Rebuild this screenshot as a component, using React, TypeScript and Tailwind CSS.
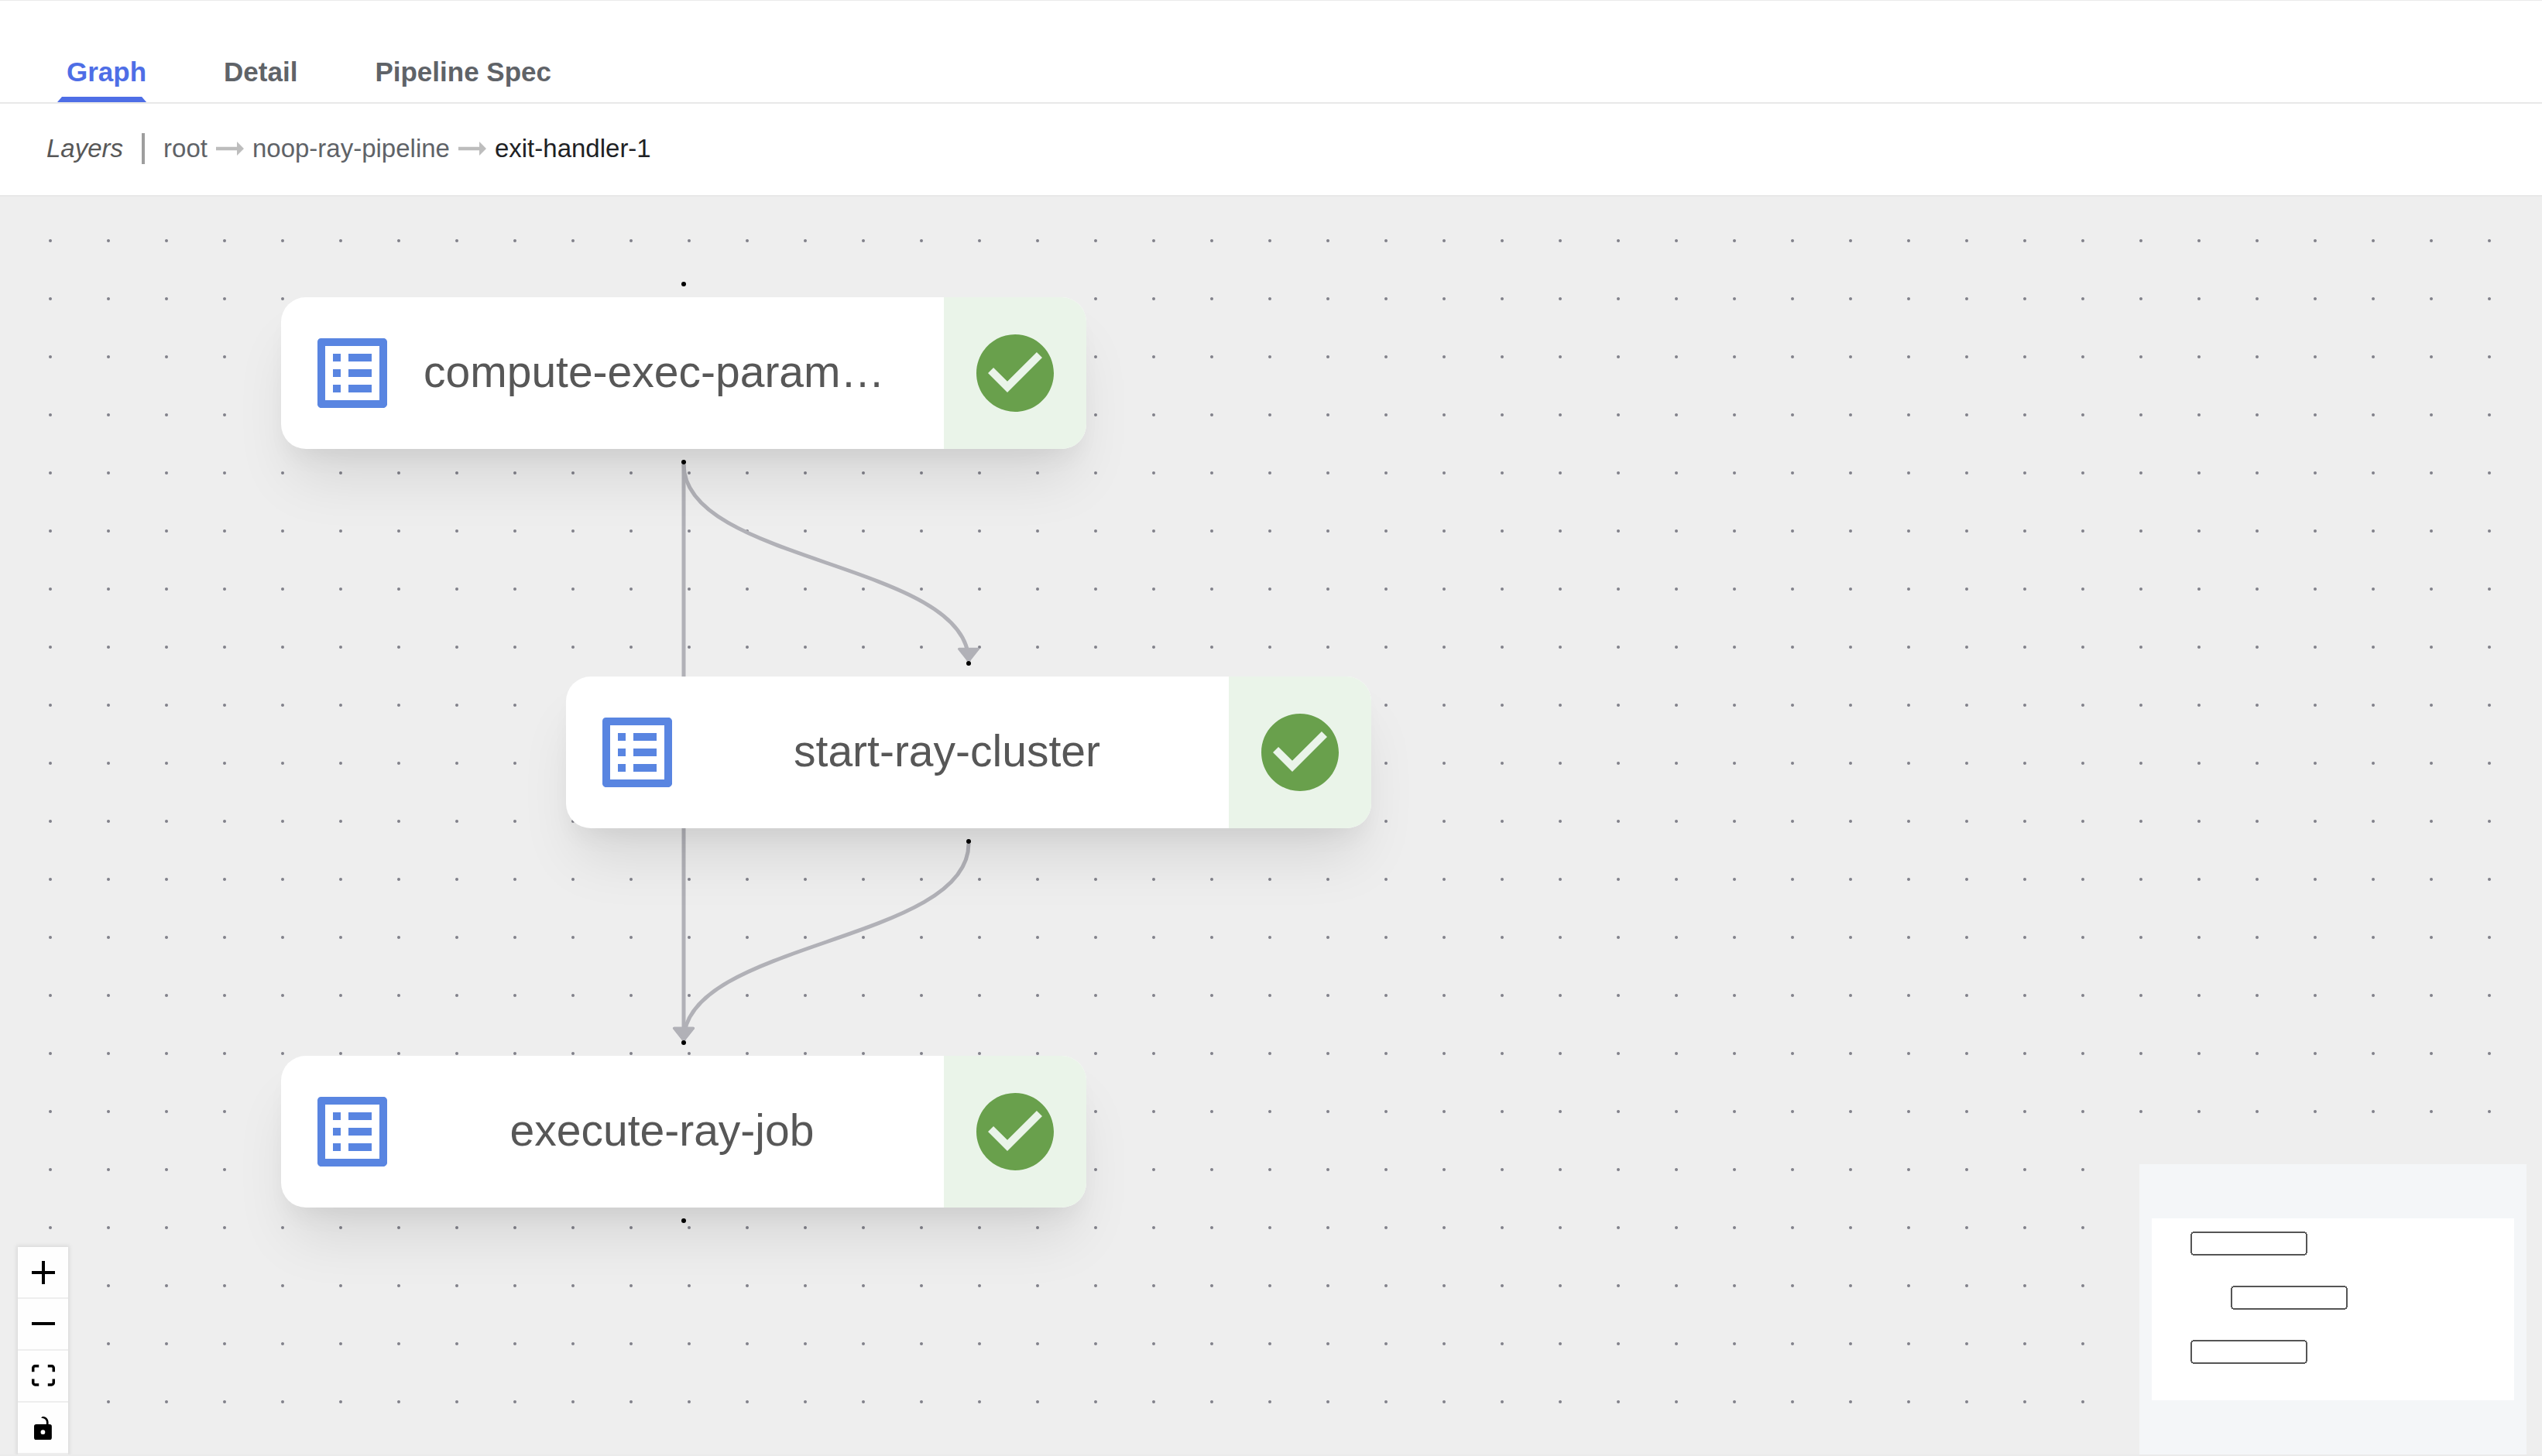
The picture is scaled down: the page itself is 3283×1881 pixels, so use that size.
import React from "react";

type TaskNode = { id: string; label: string; x: number; y: number };

const NODES: TaskNode[] = [
  { id: "params", label: "compute-exec-parameters", x: 363, y: 130 },
  { id: "start", label: "start-ray-cluster", x: 731, y: 620 },
  { id: "execute", label: "execute-ray-job", x: 363, y: 1110 },
];

const EDGES = [
  "M883 346 C883 473 1251 473 1251 600",
  "M883 346 V1090",
  "M1251 836 C1251 963 883 963 883 1090",
];

function ArrowIcon() {
  return (
    <svg viewBox="0 0 24 24" className="mx-0.5 size-[54px] text-[#bdbdbd]" fill="currentColor" aria-hidden="true">
      <path d="M16.01 11H4v2h12.01v3L20 12l-3.99-4z" />
    </svg>
  );
}

function ListIcon() {
  return (
    <svg viewBox="0 0 24 24" className="size-[120px] shrink-0 text-[#5985e1]" fill="currentColor" aria-hidden="true">
      <path d="M19 5v14H5V5h14m1.1-2H3.9c-.5 0-.9.4-.9.9v16.2c0 .4.4.9.9.9h16.2c.4 0 .9-.5.9-.9V3.9c0-.5-.5-.9-.9-.9zM11 7h6v2h-6V7zm0 4h6v2h-6v-2zm0 4h6v2h-6zM7 7h2v2H7zm0 4h2v2H7zm0 4h2v2H7z" />
    </svg>
  );
}

function CheckIcon() {
  return (
    <svg viewBox="0 0 24 24" className="size-[120px] text-[#69a04c]" fill="currentColor" role="img" aria-label="Succeeded">
      <path d="M12 2C6.48 2 2 6.48 2 12s4.48 10 10 10 10-4.48 10-10S17.52 2 12 2zm-2 15l-5-5 1.41-1.41L10 14.17l7.59-7.59L19 8l-9 9z" />
    </svg>
  );
}

function Tabs() {
  const tabs = ["Graph", "Detail", "Pipeline Spec"];
  return (
    <div
      className="flex h-[134px] items-end gap-[100px] border-t border-b-2 border-t-[#ebebeb] border-b-[#e8e8e8] pl-[86px]"
      role="tablist"
    >
      {tabs.map((tab, i) => (
        <button
          key={tab}
          type="button"
          role="tab"
          aria-selected={i === 0}
          className={
            i === 0
              ? "relative pb-[19px] text-[35px] leading-10 font-bold text-[#4e6ee6]"
              : "relative pb-[19px] text-[35px] leading-10 font-bold text-[#5f6368]"
          }
        >
          {tab}
          {i === 0 && (
            <span className="absolute right-0 bottom-0 -left-3 h-[7px] bg-[#4e6ee6] [clip-path:polygon(6px_0,calc(100%-6px)_0,100%_100%,0_100%)]" />
          )}
        </button>
      ))}
    </div>
  );
}

function Layers() {
  return (
    <nav className="flex h-[120px] items-center border-b-2 border-[#e8e8e8] pb-0.5 pl-[60px] text-[33px] leading-10 text-[#5f6368]">
      <span className="text-[#575757] italic">Layers</span>
      <span className="mx-6 h-10 w-1 bg-[#9e9e9e]" />
      <button type="button">root</button>
      <ArrowIcon />
      <button type="button">noop-ray-pipeline</button>
      <ArrowIcon />
      <button type="button" className="text-[#202124]">
        exit-handler-1
      </button>
    </nav>
  );
}

function GraphNode({ node }: { node: TaskNode }) {
  return (
    <div className="absolute" style={{ left: node.x, top: node.y }}>
      <button
        type="button"
        title={node.label}
        className="flex h-[196px] w-[1040px] overflow-hidden rounded-[32px] bg-white text-center shadow-[0_50px_75px_-15px_rgba(0,0,0,0.1),0_20px_30px_-10px_rgba(0,0,0,0.05)]"
      >
        <span className="flex h-full min-w-0 flex-1 items-center gap-8 pr-14 pl-8">
          <ListIcon />
          <span className="min-w-0 flex-1 truncate pb-1 text-[57px] leading-[80px] text-[#575757]">{node.label}</span>
        </span>
        <span className="flex h-full w-[184px] items-center justify-center bg-[#eaf4e9]">
          <CheckIcon />
        </span>
      </button>
      <span className="absolute -top-5 left-1/2 -ml-[3px] size-1.5 rounded-full bg-black" />
      <span className="absolute -bottom-5 left-1/2 -ml-[3px] size-1.5 rounded-full bg-black" />
    </div>
  );
}

function Controls() {
  const button = "flex h-[67px] w-[65px] items-center justify-center border-b-2 border-[#eeeeee] bg-[#fefefe]";
  return (
    <div className="absolute bottom-0 left-[23px] flex flex-col shadow-[0_0_5px_2px_rgba(0,0,0,0.08)]">
      <button type="button" aria-label="Zoom in" className={button}>
        <svg viewBox="0 0 32 32" className="w-[30px]">
          <path d="M32 18.133H18.133V32h-4.266V18.133H0v-4.266h13.867V0h4.266v13.867H32z" />
        </svg>
      </button>
      <button type="button" aria-label="Zoom out" className={button}>
        <svg viewBox="0 0 32 5" className="w-[30px]">
          <path d="M0 0h32v4.2H0z" />
        </svg>
      </button>
      <button type="button" aria-label="Fit view" className={button}>
        <svg viewBox="0 0 32 30" className="w-[30px]">
          <path d="M3.692 4.63c0-.53.4-.938.939-.938h5.215V0H4.708C2.13 0 0 2.054 0 4.63v5.216h3.692V4.631zM27.354 0h-5.2v3.692h5.17c.53 0 .984.4.984.939v5.215H32V4.631A4.624 4.624 0 0027.354 0zm.954 24.83c0 .532-.4.94-.939.94h-5.215v3.768h5.215c2.577 0 4.631-2.13 4.631-4.707v-5.139h-3.692v5.139zm-23.677.94c-.531 0-.939-.4-.939-.94v-5.138H0v5.139c0 2.577 2.13 4.707 4.708 4.707h5.138V25.77H4.631z" />
        </svg>
      </button>
      <button type="button" aria-label="Toggle interactivity" className={button}>
        <svg viewBox="0 0 25 32" className="h-[30px]">
          <path d="M21.333 10.667H19.81V7.619C19.81 3.429 16.38 0 12.19 0c-4.114 1.828-1.37 2.133.305 2.438 1.676.305 4.42 2.59 4.42 5.181v3.048H3.047A3.056 3.056 0 000 13.714v15.238A3.056 3.056 0 003.048 32h18.285a3.056 3.056 0 003.048-3.048V13.714a3.056 3.056 0 00-3.048-3.047zM12.19 24.533a3.056 3.056 0 01-3.047-3.047 3.056 3.056 0 013.047-3.048 3.056 3.056 0 013.048 3.048 3.056 3.056 0 01-3.048 3.047z" />
        </svg>
      </button>
    </div>
  );
}

function MiniMap() {
  return (
    <svg
      viewBox="0 0 500 375"
      className="absolute right-5 bottom-0 h-[375px] w-[500px] bg-[#f4f6f8]"
      role="img"
      aria-label="Graph overview"
    >
      <rect x="16" y="70" width="468" height="235" fill="#ffffff" />
      <g fill="#ffffff" stroke="#555555" strokeWidth="2" shapeRendering="crispEdges">
        <rect x="67" y="88" width="149" height="29" rx="4" />
        <rect x="119" y="158" width="149" height="29" rx="4" />
        <rect x="67" y="228" width="149" height="29" rx="4" />
      </g>
    </svg>
  );
}

export default function App() {
  return (
    <div className="flex h-screen flex-col overflow-hidden bg-white font-['Liberation_Sans',Arial,sans-serif]">
      <Tabs />
      <Layers />
      <main className="relative min-h-0 flex-1 overflow-hidden border-b-2 border-[#ebebeb] bg-[#eeeeee]">
        <svg className="absolute inset-0 size-full" aria-hidden="true">
          <defs>
            <pattern id="dots" width="75" height="75" x="27" y="19" patternUnits="userSpaceOnUse">
              <circle cx="38" cy="38" r="2" fill="#81818a" />
            </pattern>
            <marker id="arrow" markerWidth="12.5" markerHeight="12.5" viewBox="-10 -10 20 20" orient="auto" refX="0" refY="0">
              <polyline
                points="-5,-4 0,0 -5,4 -5,-4"
                fill="#b1b1b7"
                stroke="#b1b1b7"
                strokeWidth="1"
                strokeLinecap="round"
                strokeLinejoin="round"
              />
            </marker>
          </defs>
          <rect width="100%" height="100%" fill="url(#dots)" />
          {EDGES.map((d) => (
            <path key={d} d={d} fill="none" stroke="#b1b1b7" strokeWidth="5" markerEnd="url(#arrow)" />
          ))}
        </svg>
        {NODES.map((node) => (
          <GraphNode key={node.id} node={node} />
        ))}
        <Controls />
        <MiniMap />
      </main>
    </div>
  );
}
